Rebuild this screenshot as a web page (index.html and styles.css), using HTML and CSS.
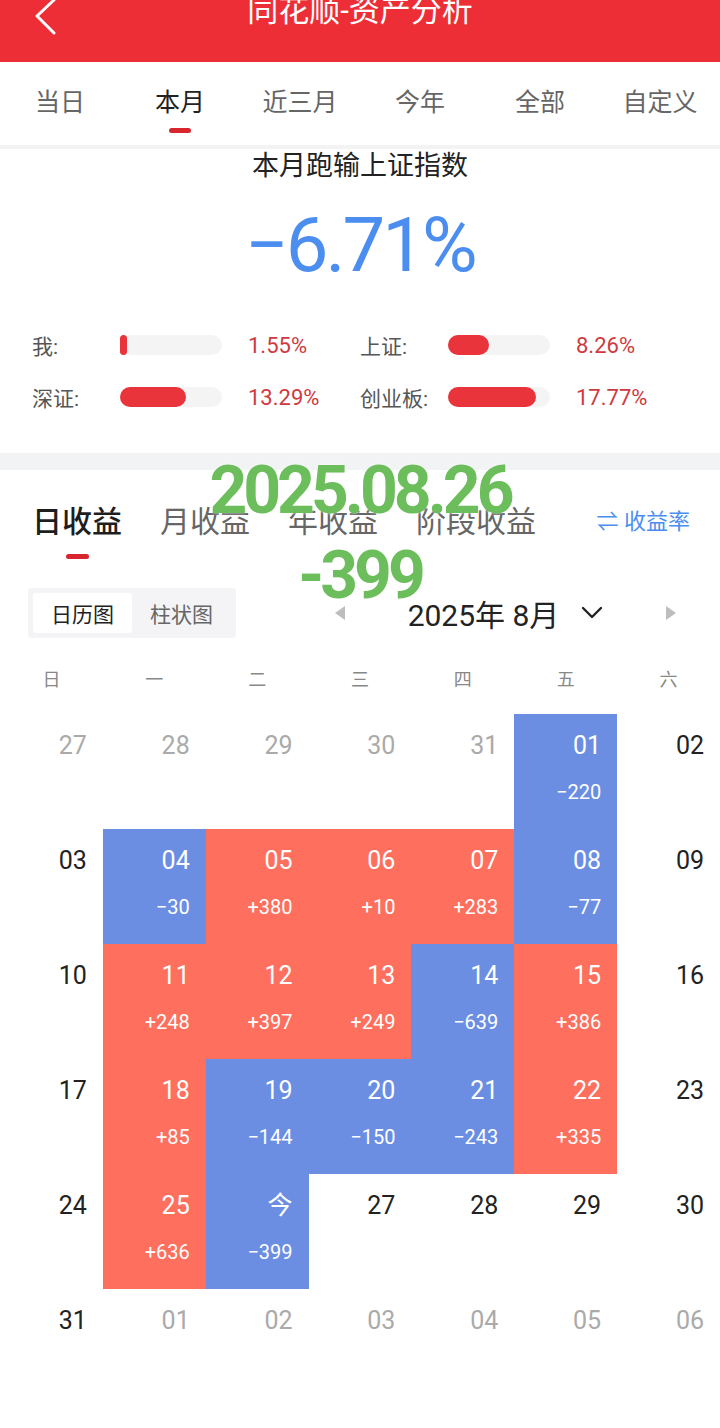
FILE: index.html
```html
<!DOCTYPE html>
<html lang="zh-CN">
<head>
  <meta charset="UTF-8" />
  <meta name="viewport" content="width=device-width, initial-scale=1.0"/>
  <title>同花顺-资产分析</title>
  <link rel="stylesheet" href="styles.css">
</head>
<body>
  <header class="topbar">
    <div class="back">
      <svg width="24" height="36" viewBox="0 0 24 36"><polyline points="20,1 3,17 20,34" fill="none" stroke="#fff" stroke-width="3" stroke-linecap="round" stroke-linejoin="round"/></svg>
    </div>
    <h1 class="title">同花顺-资产分析</h1>
    <div></div>
  </header>

  <nav class="range-tabs">
    <div class="range-tab"><span>当日</span><i></i></div>
    <div class="range-tab active"><span>本月</span><i></i></div>
    <div class="range-tab"><span>近三月</span><i></i></div>
    <div class="range-tab"><span>今年</span><i></i></div>
    <div class="range-tab"><span>全部</span><i></i></div>
    <div class="range-tab"><span>自定义</span><i></i></div>
  </nav>

  <section class="summary">
    <div class="summary-title">本月跑输上证指数</div>
    <div class="summary-num">−6.71%</div>
    <div class="compare">
      <div class="stat">
        <span class="stat-label">我:</span>
        <div class="track"><div class="fill" style="width: 7px"></div></div>
        <span class="stat-value">1.55%</span>
      </div>
      <div class="stat">
        <span class="stat-label">上证:</span>
        <div class="track"><div class="fill" style="width: 41px"></div></div>
        <span class="stat-value">8.26%</span>
      </div>
      <div class="stat">
        <span class="stat-label">深证:</span>
        <div class="track"><div class="fill" style="width: 66px"></div></div>
        <span class="stat-value">13.29%</span>
      </div>
      <div class="stat">
        <span class="stat-label">创业板:</span>
        <div class="track"><div class="fill" style="width: 88px"></div></div>
        <span class="stat-value">17.77%</span>
      </div>
    </div>
  </section>

  <div class="gap-band"></div>

  <section class="profit">
    <div class="mark mark-date">2025.08.26</div>
    <div class="mark mark-amt">-399</div>

    <div class="profit-tabs">
      <div class="profit-tab active"><span>日收益</span><i></i></div>
      <div class="profit-tab"><span>月收益</span><i></i></div>
      <div class="profit-tab"><span>年收益</span><i></i></div>
      <div class="profit-tab"><span>阶段收益</span><i></i></div>
      <div class="rate-switch">⇌ 收益率</div>
    </div>

    <div class="toolbar">
      <div class="seg">
        <div class="seg-item active">日历图</div>
        <div class="seg-item">柱状图</div>
      </div>
      <div class="month-nav">
        <svg width="10" height="14" viewBox="0 0 10 14"><polygon points="10,0 0,7 10,14" fill="#bdbdbd"/></svg>
        <div class="month">
          <span>2025年 8月</span>
          <svg width="22" height="14" viewBox="0 0 22 14"><polyline points="2,2 11,11 20,2" fill="none" stroke="#222" stroke-width="2.4" stroke-linecap="round" stroke-linejoin="round"/></svg>
        </div>
        <svg width="10" height="14" viewBox="0 0 10 14"><polygon points="0,0 10,7 0,14" fill="#bdbdbd"/></svg>
      </div>
    </div>

    <div class="weekdays">
      <span>日</span><span>一</span><span>二</span><span>三</span><span>四</span><span>五</span><span>六</span>
    </div>

    <div class="calendar">
      <div class="day other"><span class="num">27</span></div>
      <div class="day other"><span class="num">28</span></div>
      <div class="day other"><span class="num">29</span></div>
      <div class="day other"><span class="num">30</span></div>
      <div class="day other"><span class="num">31</span></div>
      <div class="day loss"><span class="num">01</span><span class="amt">−220</span></div>
      <div class="day"><span class="num">02</span></div>

      <div class="day"><span class="num">03</span></div>
      <div class="day loss"><span class="num">04</span><span class="amt">−30</span></div>
      <div class="day gain"><span class="num">05</span><span class="amt">+380</span></div>
      <div class="day gain"><span class="num">06</span><span class="amt">+10</span></div>
      <div class="day gain"><span class="num">07</span><span class="amt">+283</span></div>
      <div class="day loss"><span class="num">08</span><span class="amt">−77</span></div>
      <div class="day"><span class="num">09</span></div>

      <div class="day"><span class="num">10</span></div>
      <div class="day gain"><span class="num">11</span><span class="amt">+248</span></div>
      <div class="day gain"><span class="num">12</span><span class="amt">+397</span></div>
      <div class="day gain"><span class="num">13</span><span class="amt">+249</span></div>
      <div class="day loss"><span class="num">14</span><span class="amt">−639</span></div>
      <div class="day gain"><span class="num">15</span><span class="amt">+386</span></div>
      <div class="day"><span class="num">16</span></div>

      <div class="day"><span class="num">17</span></div>
      <div class="day gain"><span class="num">18</span><span class="amt">+85</span></div>
      <div class="day loss"><span class="num">19</span><span class="amt">−144</span></div>
      <div class="day loss"><span class="num">20</span><span class="amt">−150</span></div>
      <div class="day loss"><span class="num">21</span><span class="amt">−243</span></div>
      <div class="day gain"><span class="num">22</span><span class="amt">+335</span></div>
      <div class="day"><span class="num">23</span></div>

      <div class="day"><span class="num">24</span></div>
      <div class="day gain"><span class="num">25</span><span class="amt">+636</span></div>
      <div class="day loss"><span class="num">今</span><span class="amt">−399</span></div>
      <div class="day"><span class="num">27</span></div>
      <div class="day"><span class="num">28</span></div>
      <div class="day"><span class="num">29</span></div>
      <div class="day"><span class="num">30</span></div>

      <div class="day"><span class="num">31</span></div>
      <div class="day other"><span class="num">01</span></div>
      <div class="day other"><span class="num">02</span></div>
      <div class="day other"><span class="num">03</span></div>
      <div class="day other"><span class="num">04</span></div>
      <div class="day other"><span class="num">05</span></div>
      <div class="day other"><span class="num">06</span></div>
    </div>
  </section>
</body>
</html>
```

FILE: styles.css
```css
body {
  margin: 0;
  background: #fff;
  font-family: Roboto, "Noto Sans CJK SC", sans-serif;
  color: #222;
}
.topbar {
  height: 62px;
  background: #ee2e36;
  display: grid;
  grid-template-columns: 1fr auto 1fr;
  align-items: start;
  overflow: hidden;
}
.back {
  padding-left: 34px;
  margin-top: -1px;
}
.title {
  margin: -6px 0 0;
  font-size: 31px;
  font-weight: normal;
  line-height: 34px;
  color: #fff;
}
.range-tabs {
  display: grid;
  grid-template-columns: repeat(6, 1fr);
  padding: 24px 0 12px;
  border-bottom: 4px solid #f3f3f3;
}
.range-tab {
  display: flex;
  flex-direction: column;
  align-items: center;
  font-size: 25px;
  line-height: 34px;
  color: #666;
}
.range-tab i {
  width: 22px;
  height: 5px;
  margin-top: 8px;
  border-radius: 3px;
}
.range-tab.active {
  color: #222;
}
.range-tab.active i {
  background: #d8262e;
}
.summary {
  padding-bottom: 30px;
  text-align: center;
}
.summary-title {
  font-size: 27px;
  line-height: 34px;
  color: #222;
}
.summary-num {
  margin-top: 18px;
  font-size: 76px;
  line-height: 89px;
  letter-spacing: -3px;
  color: #4b8ef0;
}
.compare {
  display: grid;
  grid-template-columns: 328px 1fr;
  margin-top: 29px;
  padding-left: 32px;
  text-align: left;
}
.stat {
  display: flex;
  align-items: center;
  height: 52px;
}
.stat-label {
  width: 88px;
  font-size: 21px;
  color: #555;
}
.track {
  width: 102px;
  height: 20px;
  border-radius: 10px;
  background: #f4f4f4;
}
.fill {
  height: 100%;
  border-radius: 10px;
  background: #e8343a;
}
.stat-value {
  margin-left: 26px;
  font-size: 22px;
  color: #cf3a40;
}
.gap-band {
  height: 17px;
  background: #f2f3f5;
}
.profit {
  position: relative;
}
.mark {
  position: absolute;
  left: 0;
  right: 0;
  text-align: center;
  font-size: 66px;
  font-weight: bold;
  line-height: 66px;
  letter-spacing: -4px;
  color: #6cbd5b;
  text-shadow: 0 0 3px rgba(255, 255, 255, 0.8);
}
.mark-date {
  top: -12px;
}
.mark-amt {
  top: 73px;
}
.profit-tabs {
  display: flex;
  align-items: flex-start;
  gap: 38px;
  padding: 32px 30px 0 32px;
}
.profit-tab {
  display: flex;
  flex-direction: column;
  align-items: center;
  font-size: 30px;
  line-height: 40px;
  color: #666;
}
.profit-tab i {
  width: 23px;
  height: 5px;
  margin-top: 12px;
  border-radius: 3px;
}
.profit-tab.active {
  color: #1e1e1e;
  font-weight: 500;
}
.profit-tab.active i {
  background: #d8262e;
}
.rate-switch {
  margin-left: auto;
  font-size: 22px;
  line-height: 40px;
  color: #4b8ef0;
}
.toolbar {
  display: flex;
  align-items: center;
  margin-top: 29px;
  padding-left: 28px;
}
.seg {
  display: flex;
  padding: 5px;
  background: #f4f4f6;
  border-radius: 4px;
}
.seg-item {
  width: 99px;
  height: 40px;
  display: flex;
  align-items: center;
  justify-content: center;
  font-size: 21px;
  color: #666;
  border-radius: 3px;
}
.seg-item.active {
  background: #fff;
  color: #222;
}
.month-nav {
  flex: 1;
  display: flex;
  align-items: center;
  justify-content: space-between;
  margin: 0 44px 0 99px;
}
.month {
  display: flex;
  align-items: center;
  gap: 22px;
  font-size: 30px;
  color: #222;
}
.weekdays {
  display: grid;
  grid-template-columns: repeat(7, 1fr);
  height: 44px;
  align-items: center;
  margin-top: 18px;
  text-align: center;
  font-size: 18px;
  color: #888;
}
.calendar {
  display: grid;
  grid-template-columns: repeat(7, 1fr);
  grid-auto-rows: 115px;
  margin-top: 14px;
}
.day {
  display: flex;
  flex-direction: column;
  align-items: flex-end;
  padding: 14px 16px 0 0;
  color: #222;
}
.num {
  font-size: 25px;
  line-height: 36px;
}
.amt {
  margin-top: 14px;
  font-size: 20px;
  line-height: 28px;
}
.day.other {
  color: #aaa;
}
.day.gain {
  background: #fe6f5e;
  color: #fff;
}
.day.loss {
  background: #6b8ee3;
  color: #fff;
}
```
